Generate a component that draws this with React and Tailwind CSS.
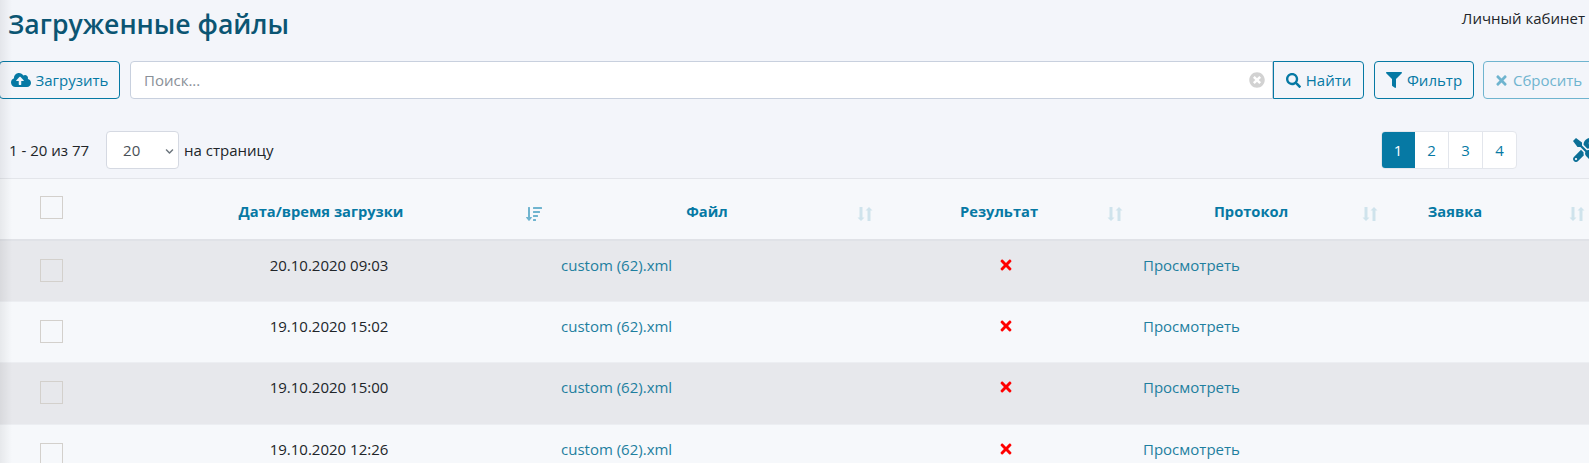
import { FaCloudUploadAlt, FaSearch, FaFilter, FaTimes, FaTimesCircle, FaTools, FaSortAmountDown, FaChevronDown } from 'react-icons/fa'

const rows = [
  '20.10.2020 09:03',
  '19.10.2020 15:02',
  '19.10.2020 15:00',
  '19.10.2020 12:26',
]

function SortNeutral() {
  return (
    <svg viewBox="0 0 16 16" className="w-4 h-4 text-[#cfe3ec]" fill="currentColor">
      <path d="M2.500 1h3v10.500h2L4 15 .5 11.500h2z" />
      <path d="M13.500 15h-3V4.500h-2L12 1l3.500 3.500h-2z" />
    </svg>
  )
}

function Th({ title, pr, right, active }) {
  return (
    <th className={`relative align-middle pt-[5px] text-center text-[14.7px] font-bold text-[#0679a4] ${pr}`}>
      {title}
      <span className={`absolute top-[27px] text-[#6fb4cf] ${right}`}>
        {active ? <FaSortAmountDown className="w-4 h-4" /> : <SortNeutral />}
      </span>
    </th>
  )
}

export default function App() {
  return (
    <div className="relative h-[463px] w-[1589px] overflow-hidden bg-[#f3f5fa] font-['Open_Sans',sans-serif] text-[15px] text-[#212529]">
      {/* left page shadow */}
      <div className="absolute left-0 top-0 z-10 h-full w-3 bg-gradient-to-r from-[#00000010] to-transparent" />

      <div className="flex items-start justify-between h-[61px] pl-2 pr-[4px]">
        <h1 className="text-[26.6px] font-semibold leading-none mt-[11px] text-[#0b5573]">Загруженные файлы</h1>
        <a className="mt-[7px]">Личный кабинет</a>
      </div>

      <div className="flex h-[38px] w-[1620px] -ml-px">
        <button className="flex items-center justify-center gap-[5px] w-[121px] rounded border border-[#0679a4] text-[#0679a4]">
          <FaCloudUploadAlt className="w-5 h-5" />
          Загрузить
        </button>
        <div className="relative ml-[10px] w-[1143px]">
          <input placeholder="Поиск..." className="w-full h-full rounded-l border border-[#c8d0de] bg-white pl-[13px] pr-8 outline-none placeholder:text-[#8a9098]" />
          <FaTimesCircle className="absolute right-[8px] top-[11px] w-4 h-4 text-[#d2d2d2]" />
        </div>
        <button className="flex items-center justify-center gap-[5px] w-[91px] rounded-r border border-[#0679a4] text-[#0679a4]">
          <FaSearch className="w-[15px] h-[15px]" />
          Найти
        </button>
        <button className="flex items-center justify-center gap-[5px] w-[100px] ml-[10px] rounded border border-[#0679a4] text-[#0679a4]">
          <FaFilter className="w-[16px] h-[16px]" />
          Фильтр
        </button>
        <button className="flex items-center gap-[4px] w-[130px] ml-[9px] pl-[10px] rounded border border-[#6fb4cf] text-[#6fb4cf]">
          <FaTimes className="w-[15px] h-[15px]" />
          Сбросить
        </button>
      </div>

      <div className="relative flex items-center h-[38px] mt-[32px] pl-[9px]">
        <span>1 - 20 из 77</span>
        <div className="relative ml-[17px] w-[73px] h-[38px] rounded border border-[#d5d9e2] bg-white">
          <span className="absolute left-[16px] top-[7px] text-[#495057]">20</span>
          <FaChevronDown className="absolute right-[4px] top-[15px] w-[9px] h-[9px] text-[#6c757d]" />
        </div>
        <span className="ml-[5px]">на страницу</span>
        <div className="flex ml-auto mr-[72px] h-[38px] rounded border border-[#e3e6ec] bg-white text-[#0679a4] overflow-hidden">
          <span className="flex items-center justify-center w-[34px] -m-px bg-[#0679a4] text-white">1</span>
          <span className="flex items-center justify-center w-[34px] ml-px border-r border-[#e3e6ec]">2</span>
          <span className="flex items-center justify-center w-[34px] border-r border-[#e3e6ec]">3</span>
          <span className="flex items-center justify-center w-[33px]">4</span>
        </div>
        <FaTools className="absolute left-[1573px] top-[7px] w-6 h-6 text-[#0b6f96]" />
      </div>

      <table className="mt-[9px] w-[1589px] table-fixed border-collapse">
        <colgroup>
          <col className="w-[111px]" />
          <col className="w-[436px]" />
          <col className="w-[328px]" />
          <col className="w-[254px]" />
          <col className="w-[256px]" />
          <col className="w-[204px]" />
        </colgroup>
        <thead>
          <tr className="h-[61px] bg-[#f6f8fb] border-t border-b-2 border-t-[#e3e5ea] border-b-[#e0e2e7]">
            <th className="align-top pt-[17px] pl-[40px]">
              <div className="w-[23px] h-[23px] border border-[#d3d0cc]" />
            </th>
            <Th title="Дата/время загрузки" pr="pr-[16px]" right="right-[5px]" active />
            <Th title="Файл" pr="pr-[8px]" right="right-[2px]" />
            <Th title="Результат" pr="pr-[6px]" right="right-[6px]" />
            <Th title="Протокол" pr="pr-[12px]" right="right-[7px]" />
            <Th title="Заявка" pr="pr-[64px]" right="right-[4px]" />
          </tr>
        </thead>
        <tbody>
          {rows.map((date, i) => (
            <tr key={date} className={`h-[61.5px] border-b border-[#eceef2] ${i % 2 === 0 ? 'bg-[#e7e8ec]' : 'bg-[#f6f8fb]'}`}>
              <td className="align-top pt-[18px] pl-[40px]">
                <div className="w-[23px] h-[23px] border border-[#d3d0cc]" />
              </td>
              <td className="align-top pt-[13px] text-center">{date}</td>
              <td className="align-top pt-[13px] pl-[14px] text-[#1e7f9f]">custom (62).xml</td>
              <td className="align-top pt-[16px] pl-[8px] text-center">
                <FaTimes className="inline-block w-[16px] h-[16px] align-top text-[#ff0000]" />
              </td>
              <td className="align-top pt-[13px] pl-[14px] text-[#1e7f9f]">Просмотреть</td>
              <td />
            </tr>
          ))}
        </tbody>
      </table>
    </div>
  )
}
